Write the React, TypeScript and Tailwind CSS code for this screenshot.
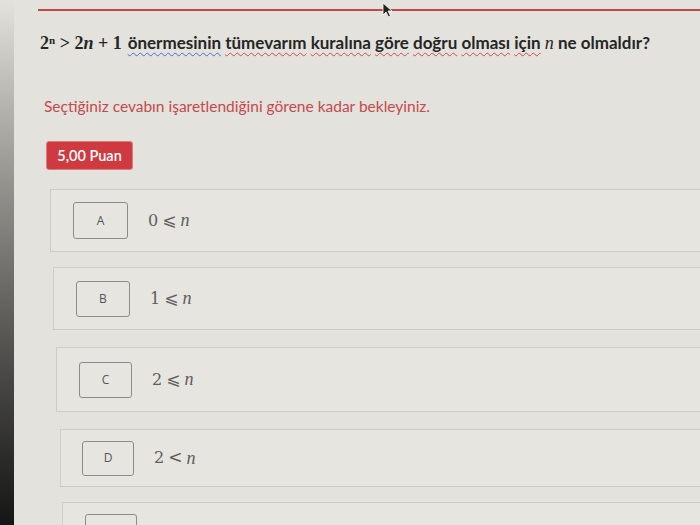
import React from "react";

const W = ({ children, blue }: { children: React.ReactNode; blue?: boolean }) => (
  <span
    className={
      blue
        ? "underline decoration-wavy decoration-[#4a6fd0] decoration-1 underline-offset-[3px]"
        : "underline decoration-wavy decoration-[#d0494e] decoration-1 underline-offset-[3px]"
    }
  >
    {children}
  </span>
);

const options = [
  { l: "A", a: "0", op: "⩽", ml: "ml-[12px]", h: "h-[63px]", mt: "mt-[19px]", bx: "w-[55px] h-[37px] ml-[22px]", tx: "ml-[20px]" },
  { l: "B", a: "1", op: "⩽", ml: "ml-[15px]", h: "h-[63px]", mt: "mt-[15px]", bx: "w-[54px] h-[36px] ml-[22px]", tx: "ml-[20px]" },
  { l: "C", a: "2", op: "⩽", ml: "ml-[18px]", h: "h-[65px]", mt: "mt-[17px]", bx: "w-[53px] h-[36px] ml-[22px]", tx: "ml-[20px]" },
  { l: "D", a: "2", op: "<", ml: "ml-[22px]", h: "h-[58px]", mt: "mt-[17px]", bx: "w-[52px] h-[35px] ml-[21px]", tx: "ml-[20px]" },
];

export default function App() {
  return (
    <div className="relative w-[700px] h-[525px] overflow-hidden bg-[#e3e2dc] font-['Lato',sans-serif]">
      <div className="flex flex-col pl-[38px] pt-[9px]">
        <div className="h-[2px] bg-[#c4474c] mr-[-10px]" />
        <div className="mt-[21px] ml-[2px] flex items-baseline text-[17px] leading-[22px] font-bold text-[#262626] whitespace-nowrap">
          <span className="font-['Liberation_Serif',serif] text-[18px] mr-[6px]">
            2<sup className="text-[11px] font-bold">n</sup> &gt; 2<i>n</i> + 1
          </span>
          <span>
            <W blue>önermesinin</W> <W>tümevarım</W> <W>kuralına</W> <W>göre</W> <W>doğru</W>{" "}
            <W>olması</W> <W>için</W>{" "}
            <i className="font-['Liberation_Serif',serif] font-normal text-[18px]">n</i> ne olmaldır?
          </span>
        </div>
        <div className="mt-[42px] ml-[6px] text-[15.5px] leading-[20px] text-[#c44a4d]">
          Seçtiğiniz cevabın işaretlendiğini görene kadar bekleyiniz.
        </div>
        <div className="mt-[25px] ml-[8px] w-[87px] h-[29px] rounded-[3px] bg-[#cf3a41] border border-[#e07a7d] flex items-center justify-center text-white text-[14.5px] font-semibold">
          5,00 Puan
        </div>
        {options.map((o) => (
          <div
            key={o.l}
            className={`${o.mt} ${o.ml} ${o.h} mr-[-10px] flex items-center border border-[#cdccc6] bg-[#e6e5df]`}
          >
            <div
              className={`${o.bx} shrink-0 rounded-[3px] border border-[#8c8c8a] flex items-center justify-center text-[12px] text-[#555] font-['Open_Sans',sans-serif]`}
            >
              {o.l}
            </div>
            <div className={`${o.tx} text-[16px] text-[#5e5e5e] font-['DejaVu_Serif',serif] flex items-center gap-[4px]`}>
              <span>{o.a}</span>
              <span className="font-['DejaVu_Sans',sans-serif] text-[17px]">{o.op}</span>
              <i className="font-['Liberation_Serif',serif] text-[18px]">n</i>
            </div>
          </div>
        ))}
        <div className="mt-[15px] ml-[24px] h-[60px] mr-[-10px] border border-[#cdccc6] bg-[#e6e5df] pt-[11px] pl-[22px]">
          <div className="w-[52px] h-[35px] rounded-[3px] border border-[#8c8c8a]" />
        </div>
      </div>
      <div className="absolute left-0 top-0 w-[14px] h-[525px] bg-gradient-to-b from-[#e3e2dc] via-[#6a6965] via-55% to-[#161616]" />
      <div className="absolute left-[382px] top-[2px]">
        <svg width="11" height="16" viewBox="0 0 11 16">
          <path d="M1 1 L1 13 L4 10 L6.5 15 L8.5 14 L6 9 L10 9 Z" fill="#222" stroke="#fff" strokeWidth="0.8" />
        </svg>
      </div>
    </div>
  );
}
